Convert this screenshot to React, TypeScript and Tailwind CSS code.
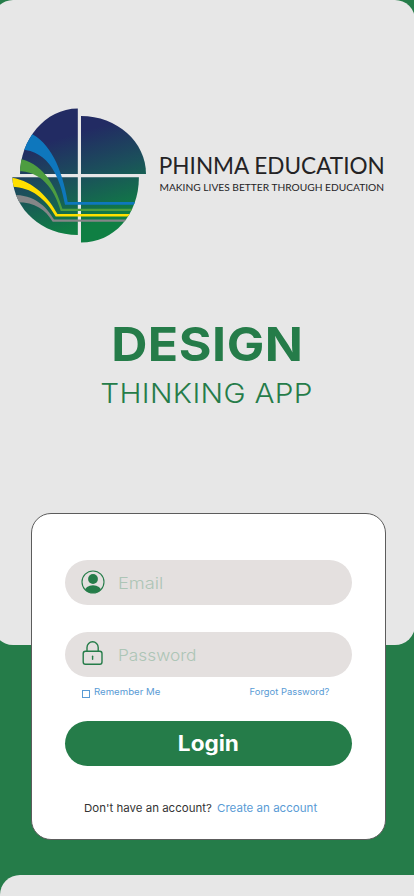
import React from "react";

function Logo() {
  return (
    <svg width="414" height="160" viewBox="0 96 414 160" className="block" role="img" aria-label="PHINMA Education">
      <defs>
        <linearGradient id="sky" gradientUnits="userSpaceOnUse" x1="62" y1="108" x2="100" y2="232">
          <stop offset="0.22" stopColor="#222b63" />
          <stop offset="0.55" stopColor="#1b505b" />
          <stop offset="0.93" stopColor="#0f7f43" />
        </linearGradient>
        <clipPath id="disc">
          <path d="M77.8 108.4C45 108.4 20 140 20 174V177.3H12.3C14 210 42 235 77.8 235H81V242.6C114 242.6 138.9 215 138.9 177.3V174H77.8Z" />
        </clipPath>
      </defs>
      <g fill="url(#sky)">
        <path d="M77.8 108.4C45 108.4 20 140 20 174H77.8Z" />
        <path d="M81 116C117 116 146 142 146 174H81Z" />
        <path d="M12.3 177.3H77.8V235C42 235 14 210 12.3 177.3Z" />
        <path d="M81 177.3H138.9C138.9 215 114 242.6 81 242.6Z" />
      </g>
      <g clipPath="url(#disc)">
        <path d="M29 132.6C50 142 62 168 67.7 202H140V204.7H65C60 178 50 151 20 149.2V132Z" fill="#0e77bd" />
        <path d="M17 158.2C42 162 55 184 62.4 208.8H138V211H60.7C54 188 41 171 17 171Z" fill="#4d9d40" />
        <path d="M10 177.4C33 180 49 198 57.4 214H135V216.4H55.7C45 198 31 186.7 10 186.7Z" fill="#ffdf00" />
        <path d="M12 194.8C35 195 46 206 54 219.6H130V221.8H52.7C45 209 34 201.5 14 202.4Z" fill="#858688" />
      </g>
      <g fill="#242325" style={{ fontFamily: "Lato, sans-serif" }}>
        <text x="158.8" y="173.5" fontSize="22.4" textLength="226" lengthAdjust="spacingAndGlyphs">PHINMA EDUCATION</text>
        <text x="159.5" y="191.3" fontSize="9.9" textLength="224.5" lengthAdjust="spacingAndGlyphs">MAKING LIVES BETTER THROUGH EDUCATION</text>
      </g>
    </svg>
  );
}

function UserIcon() {
  return (
    <svg width="24" height="24" viewBox="0 0 24 24" className="mb-px block">
      <clipPath id="avatar"><circle cx="12" cy="12" r="11" /></clipPath>
      <circle cx="12" cy="12" r="11" fill="none" stroke="#257c49" strokeWidth="1.1" />
      <circle cx="12" cy="9" r="4.9" fill="#257c49" />
      <ellipse cx="12" cy="21.5" rx="8.4" ry="6.2" fill="#257c49" clipPath="url(#avatar)" />
    </svg>
  );
}

function LockIcon() {
  return (
    <svg width="24" height="26" viewBox="0 0 24 26" className="mb-[4px] block" fill="none" stroke="#257c49" strokeWidth="1.4">
      <rect x="2.2" y="11.2" width="18.8" height="13" rx="2.2" />
      <path d="M6 11V7.4A5.6 5.6 0 0 1 17.2 7.4V11" />
      <path d="M11.6 16.2V19.2" strokeLinecap="round" />
    </svg>
  );
}

export default function App() {
  return (
    <div className="h-[896px] w-[414px] overflow-hidden bg-[#257c49] font-['Inter',sans-serif]">
      <header className="-ml-[7px] h-[645px] w-[422px] rounded-[20px] bg-[#e7e7e7] pt-[96px] pl-[7px]">
        <Logo />
        <div className="flex w-[414px] flex-col items-center pt-[64px] text-[#257c49]">
          <h1 className="scale-x-[1.065] text-[47px] leading-[48px] font-bold tracking-[0.5px] whitespace-nowrap">DESIGN</h1>
          <p className="mt-[11px] scale-x-[1.1] text-[27px] leading-[30px] font-light tracking-[0.3px] whitespace-nowrap">THINKING APP</p>
        </div>
      </header>
      <main className="relative -mt-[132px] ml-[31px] h-[327px] w-[355px] rounded-[20px] border border-[#5c5c5c] bg-white px-[33px] pt-[46px]">
        <div className="flex h-[45px] w-[287px] items-center rounded-full bg-[#e4e0df] pl-[16px]">
          <UserIcon />
          <span className="ml-[12.5px] origin-left scale-x-[1.14] text-[16px] leading-5 font-light text-[#adc5b6]">Email</span>
        </div>
        <div className="mt-[27px] flex h-[45px] w-[287px] items-center rounded-full bg-[#e4e0df] pl-[16px]">
          <LockIcon />
          <span className="ml-[12.5px] origin-left scale-x-[1.08] text-[16px] leading-5 font-light text-[#adc5b6]">Password</span>
        </div>
        <div className="mt-[9px] flex h-[14px] w-[287px] pl-[17px] text-[9px] leading-[12px] text-[#599bd5]">
          <span className="mt-[4px] size-[8px] border border-[#599bd5]" />
          <span className="ml-[4px] origin-left scale-x-[1.07]">Remember Me</span>
          <span className="mr-[23px] ml-auto origin-right scale-x-[1.045]">Forgot Password?</span>
        </div>
        <button className="mt-[21px] flex h-[45px] w-[287px] items-center justify-center rounded-full bg-[#257c49] text-[21px] leading-6 font-bold text-white">
          <span className="scale-x-[1.075]">Login</span>
        </button>
        <p className="flex pt-[34px] pl-[19px] text-[11px] leading-4 whitespace-nowrap">
          <span className="origin-left scale-x-[1.045] text-[#333]">Don't have an account?</span>
          <a className="ml-[11px] origin-left scale-x-[1.05] text-[#599bd5]">Create an account</a>
        </p>
      </main>
      <div className="mt-[35px] h-[60px] w-[434px] rounded-[20px] bg-[#e7e7e7]" />
    </div>
  );
}
